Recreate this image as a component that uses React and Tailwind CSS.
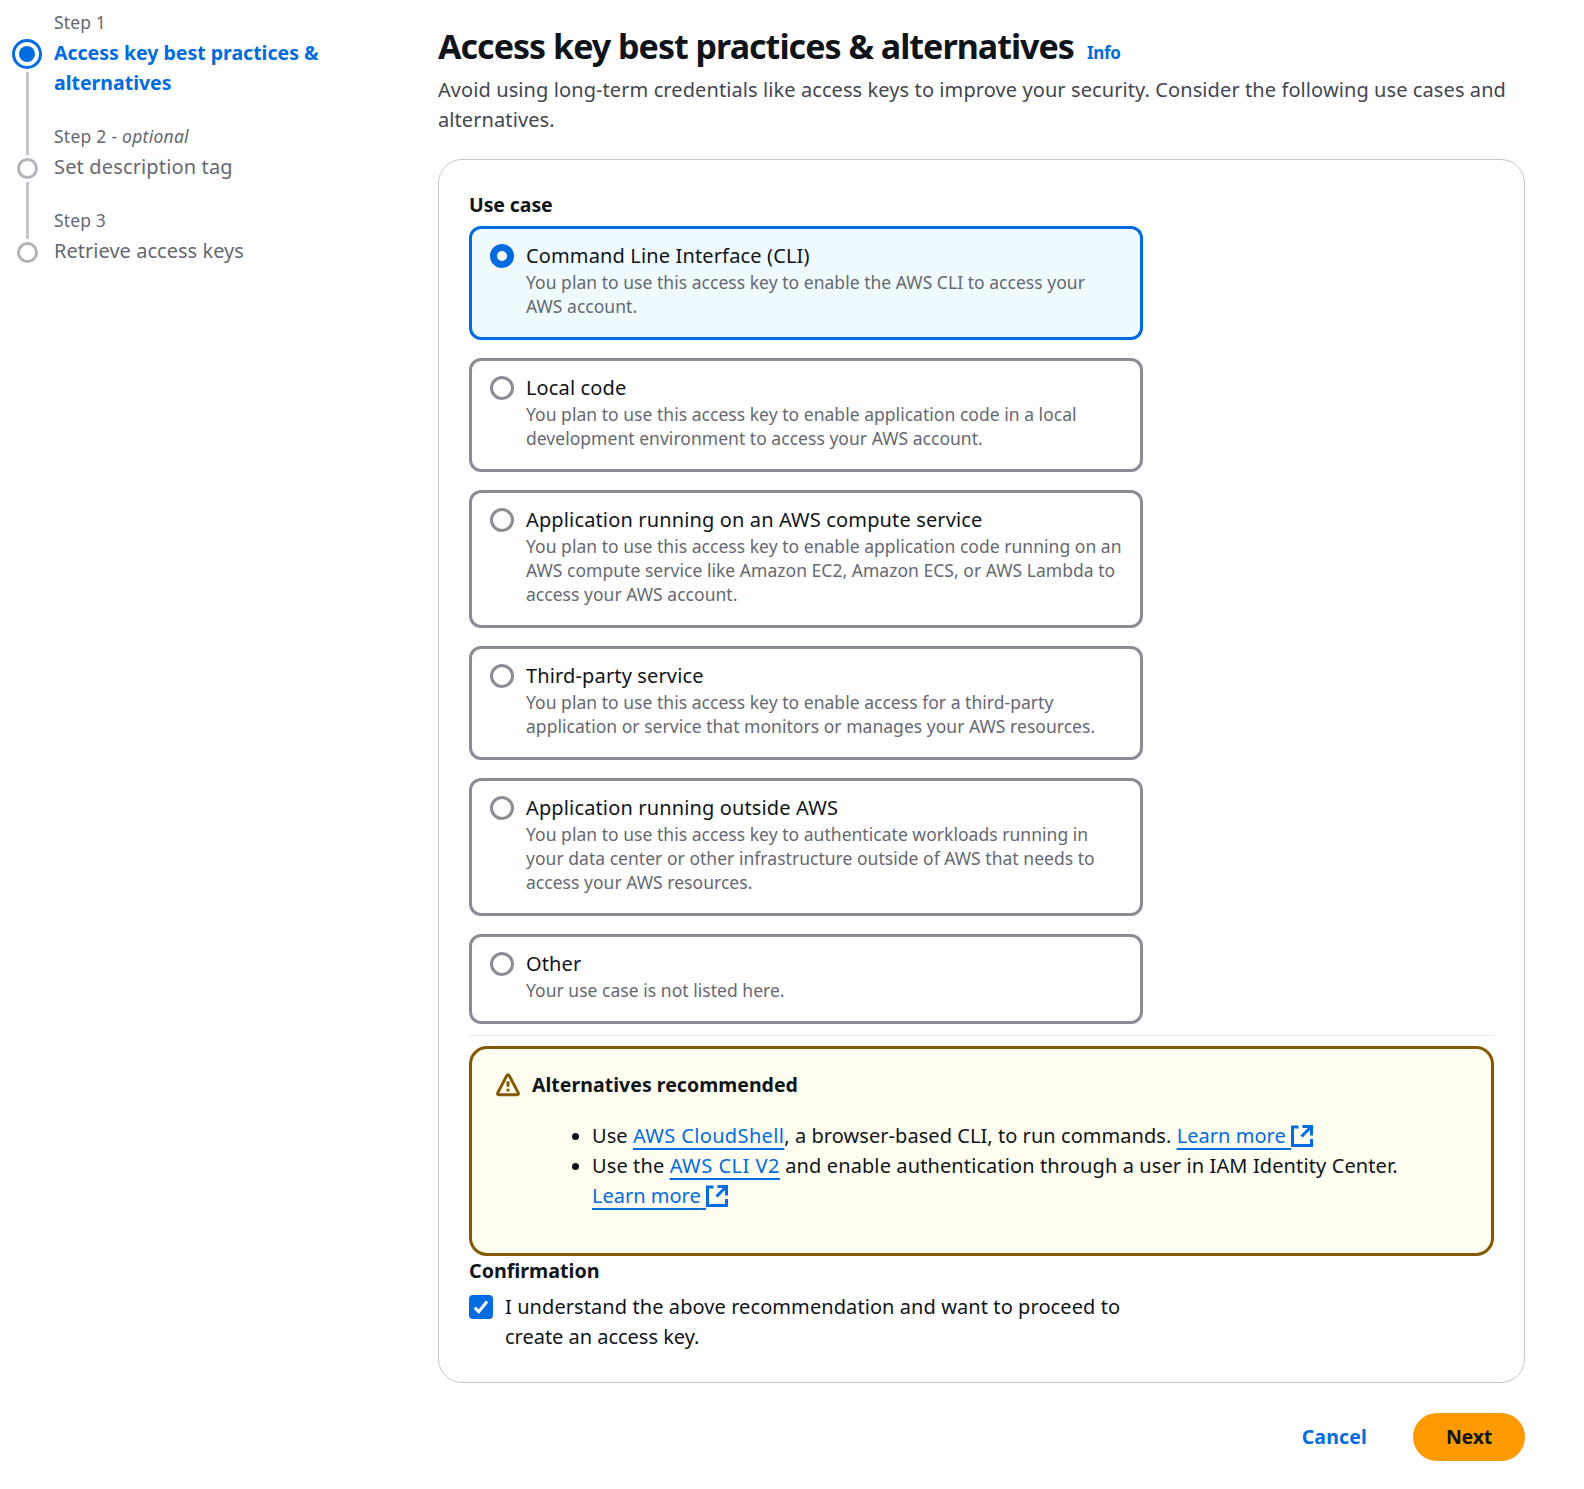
const useCases = [
  {
    title: 'Command Line Interface (CLI)',
    lines: ['You plan to use this access key to enable the AWS CLI to access your', 'AWS account.'],
    selected: true,
  },
  {
    title: 'Local code',
    lines: [
      'You plan to use this access key to enable application code in a local',
      'development environment to access your AWS account.',
    ],
  },
  {
    title: 'Application running on an AWS compute service',
    lines: [
      'You plan to use this access key to enable application code running on an',
      'AWS compute service like Amazon EC2, Amazon ECS, or AWS Lambda to',
      'access your AWS account.',
    ],
  },
  {
    title: 'Third-party service',
    lines: [
      'You plan to use this access key to enable access for a third-party',
      'application or service that monitors or manages your AWS resources.',
    ],
  },
  {
    title: 'Application running outside AWS',
    lines: [
      'You plan to use this access key to authenticate workloads running in',
      'your data center or other infrastructure outside of AWS that needs to',
      'access your AWS resources.',
    ],
  },
  { title: 'Other', lines: ['Your use case is not listed here.'] },
];

function WarningIcon() {
  return (
    <svg className="size-6 shrink-0" viewBox="0 0 24 24" fill="none" stroke="#855900" strokeWidth="3">
      <path d="M10.8 2.6 1.7 19.9c-.5.9.2 1.9 1.2 1.9h18.2c1 0 1.700-1 1.200-1.900L13.200 2.600c-.500-1-1.900-1-2.400 0Z" strokeLinejoin="round" />
      <path d="M12 8.200v5.600M12 15.800v2.700" />
    </svg>
  );
}

function ExternalIcon() {
  return (
    <svg className="inline-block size-[22px] align-[-4px]" viewBox="0 0 22 22" fill="none" stroke="#006ce0" strokeWidth="3">
      <path d="M7.5 2H1.5v18.500h19V14" />
      <path d="M11.500 1.500h9v9M20 2 10.500 11.500" />
    </svg>
  );
}

function Link({ children, external }) {
  return (
    <>
      <a className="whitespace-pre text-[#006ce0] underline decoration-2 underline-offset-[5px] [text-decoration-skip-ink:none]">
        {children}
        {external ? ' ' : ''}
      </a>
      {external && <ExternalIcon />}
    </>
  );
}

function Steps() {
  return (
    <nav className="flex w-[438px] shrink-0 pl-3 pt-[10px] text-[#656871]">
      <div className="flex w-[30px] flex-col items-center pt-[29px]">
        <span className="flex size-[30px] items-center justify-center rounded-full border-[3px] border-[#006ce0]">
          <span className="size-4 rounded-full bg-[#006ce0]" />
        </span>
        <span className="mt-[3px] h-[83px] w-[3px] bg-[#c6c6cd]" />
        <span className="my-[3px] size-[21px] rounded-full border-[3px] border-[#b4b4bb]" />
        <span className="h-[57px] w-[3px] bg-[#c6c6cd]" />
        <span className="mt-[3px] size-[21px] rounded-full border-[3px] border-[#b4b4bb]" />
      </div>
      <ol className="ml-3">
        <li className="mb-[26px]">
          <p className="h-7 text-[17.5px] leading-6 tracking-[0.15px]">Step 1</p>
          <p className="text-[19.5px] font-bold leading-[30px] tracking-normal text-[#006ce0]">
            Access key best practices &amp;
            <br />
            alternatives
          </p>
        </li>
        <li className="mb-[26px]">
          <p className="h-7 text-[17.5px] leading-6 tracking-[0.25px]">
            Step 2 - <i>optional</i>
          </p>
          <p className="leading-[30px] tracking-[0.15px]">Set description tag</p>
        </li>
        <li>
          <p className="h-7 text-[17.5px] leading-6 tracking-[0.15px]">Step 3</p>
          <p className="leading-[30px] tracking-[0.03px]">Retrieve access keys</p>
        </li>
      </ol>
    </nav>
  );
}

function UseCaseTile({ title, lines, selected }) {
  return (
    <label
      className={
        'flex w-[674px] gap-3 rounded-xl border-[3px] pb-[19px] pl-[18px] pt-3 ' +
        (selected ? 'border-[#006ce0] bg-[#f0fbff]' : 'border-[#8c8c94] bg-white')
      }
    >
      <span
        className={
          'mt-[3px] size-6 shrink-0 rounded-full bg-white ' +
          (selected ? 'border-[7px] border-[#006ce0]' : 'border-[3px] border-[#8c8c94]')
        }
      />
      <span>
        <span className="block h-[29px] tracking-[0.14px] text-[#0f141a]">{title}</span>
        {lines.map((line) => (
          <span key={line} className="block whitespace-nowrap text-[17.5px] leading-6 tracking-[0.03px] text-[#656871]">
            {line}
          </span>
        ))}
      </span>
    </label>
  );
}

export default function App() {
  return (
    <div className="flex h-[1489px] w-[1584px] bg-white font-['Noto_Sans',sans-serif] text-[20px] leading-[30px] tracking-[0.08px] text-[#0f141a]">
      <Steps />
      <main className="w-[1087px] pt-6">
        <h1 className="flex h-[51px] items-baseline whitespace-nowrap text-[34px] font-bold leading-[45px] tracking-[-0.98px]">
          Access key best practices &amp; alternatives
          <a className="ml-[13px] text-[17px] tracking-[-0.3px] text-[#006ce0]">Info</a>
        </h1>
        <p className="whitespace-nowrap tracking-[0.09px] text-[#424650]">
          Avoid using long-term credentials like access keys to improve your security. Consider the following use cases and
          <br />
          alternatives.
        </p>

        <section className="mt-6 h-[1224px] rounded-3xl border border-[#c6c6cd] px-[30px] pt-[30px]">
          <h2 className="text-[19.5px] font-bold tracking-[-0.1px]">Use case</h2>
          <div className="mt-[6px] flex flex-col gap-[18px]">
            {useCases.map((item) => (
              <UseCaseTile key={item.title} {...item} />
            ))}
          </div>
          <hr className="mt-[11px] border-t border-[#ebebf0]" />

          <div className="mt-[10px] h-[210px] rounded-[18px] border-[3px] border-[#855900] bg-[#fffef0] pl-6 pt-[21px]">
            <div className="flex items-center gap-3">
              <WarningIcon />
              <h3 className="text-[19.5px] font-bold tracking-[0.03px]">Alternatives recommended</h3>
            </div>
            <ul className="mt-[21px] pl-[76px]">
              <li className="flex">
                <span className="mr-[13px] mt-3 size-[7px] shrink-0 rounded-full bg-[#0f141a]" />
                <span className="whitespace-nowrap tracking-[0.05px]">
                  Use <span className="tracking-[0.37px]"><Link>AWS CloudShell</Link></span>, a browser-based CLI, to run commands.{' '}
                  <Link external>Learn more</Link>
                </span>
              </li>
              <li className="flex">
                <span className="mr-[13px] mt-3 size-[7px] shrink-0 rounded-full bg-[#0f141a]" />
                <span className="whitespace-nowrap tracking-[0.11px]">
                  Use the <span className="tracking-[0.5px]"><Link>AWS CLI V2</Link></span> and enable authentication through a user in IAM Identity Center.
                  <br />
                  <span className="tracking-normal"><Link external>Learn more</Link></span>
                </span>
              </li>
            </ul>
          </div>

          <h2 className="text-[19.7px] font-bold tracking-normal">Confirmation</h2>
          <label className="mt-[6px] flex gap-3">
            <span className="mt-[3px] flex size-6 shrink-0 items-center justify-center rounded-[4px] bg-[#006ce0]">
              <svg className="size-6" viewBox="0 0 24 24" fill="none" stroke="#fff" strokeWidth="3">
                <path d="m5.800 12.600 4 4.100 8.200-10.200" />
              </svg>
            </span>
            <span className="whitespace-nowrap">
              I understand the above recommendation and want to proceed to
              <br />
              <span className="tracking-[-0.02px]">create an access key.</span>
            </span>
          </label>
        </section>

        <div className="mt-[30px] flex h-12 items-center justify-end text-[19.5px] font-bold tracking-[0.15px]">
          <button className="mr-[46px] text-[#006ce0]">Cancel</button>
          <button className="h-12 w-28 rounded-full bg-[#ff9900] tracking-[-0.2px]">Next</button>
        </div>
      </main>
    </div>
  );
}
